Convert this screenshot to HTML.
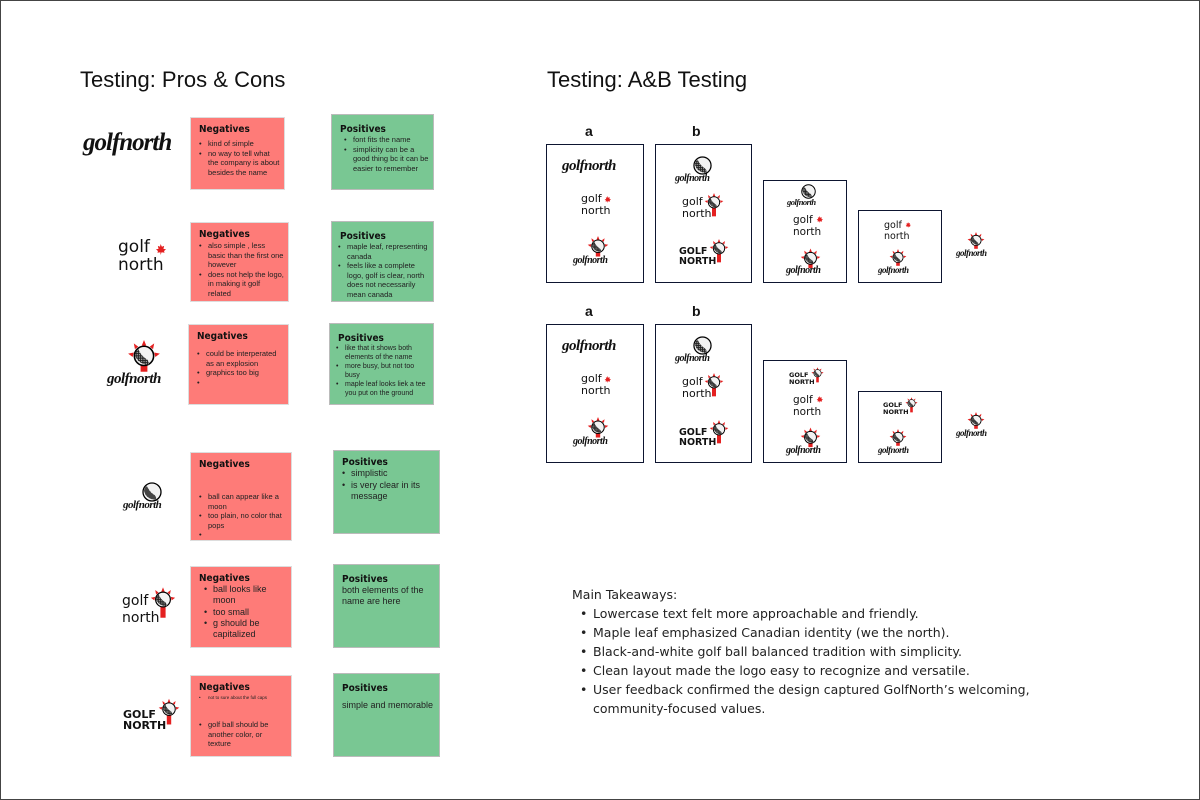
<!DOCTYPE html>
<html><head><meta charset="utf-8"><style>
*{margin:0;padding:0;box-sizing:border-box}
body{width:1200px;height:800px;background:#fff;font-family:"Liberation Sans",sans-serif;position:relative;overflow:hidden}
.frame{position:absolute;left:0;top:0;width:1200px;height:800px;border:1px solid #444}
.a{position:absolute}
h1{position:absolute;font-weight:normal;font-size:22px;color:#111;white-space:nowrap}
.neg{position:absolute;background:#fe7b78;border:1px solid #ddd}
.pos{position:absolute;background:#79c793;border:1px solid #bbb}
.hd{font-family:"DejaVu Sans Condensed","DejaVu Sans",sans-serif;font-weight:bold;font-size:10px;color:#111;margin:6px 0 0 8px}
.card ul{list-style:none;font-size:7.5px;line-height:9.5px;color:#222;margin:4px 4px 0 8px}
.card li{padding-left:9px;position:relative}
.card li:before{content:"•";position:absolute;left:0}
.script{font-family:"Liberation Serif",serif;font-style:italic;font-weight:bold;color:#111;white-space:nowrap;letter-spacing:-0.5px}
.gn{font-family:"DejaVu Sans",sans-serif;color:#111;white-space:nowrap}
.cap{font-family:"DejaVu Sans",sans-serif;font-weight:bold;color:#111;white-space:nowrap;line-height:1}
.box{position:absolute;border:1.5px solid #0d1530}
.lbl{position:absolute;font-size:14px;font-weight:bold;color:#111}
.tk{position:absolute;left:572px;top:585px;font-family:"DejaVu Sans",sans-serif;font-size:12.5px;color:#222;line-height:19px}
.tk ul{list-style:none;margin-left:8px}
.tk li{padding-left:13px;position:relative}
.tk li:before{content:"•";position:absolute;left:0}
</style></head><body>
<svg width="0" height="0" style="position:absolute">
<defs>
<pattern id="dots" width="2" height="2" patternUnits="userSpaceOnUse"><rect width="2" height="2" fill="#222"/><circle cx="1" cy="1" r="0.5" fill="#ddd"/></pattern>
<symbol id="ball" viewBox="0 0 20 20"><circle cx="10" cy="10" r="9" fill="#f2f2f2" stroke="#000" stroke-width="1.3"/><path d="M2 9 Q4 17 14 18 Q15 14 11 12 Q7 9 5 4 Q2 6 2 9Z" fill="url(#dots)"/></symbol>
<symbol id="tee" viewBox="0 0 30 36"><g fill="#e42020"><path d="M15 0l2 5h-4z"/><path d="M6 3l4 3-3 2z"/><path d="M24 3l-4 3 3 2z"/><path d="M1 12l5-1-1 4z"/><path d="M29 12l-5-1 1 4z"/><rect x="12" y="22" width="6" height="13"/></g><circle cx="15" cy="14" r="8.5" fill="#f2f2f2" stroke="#000" stroke-width="1.4"/><path d="M7 13 Q9 21 19 22 Q20 18 16 16 Q12 13 10 8 Q7 10 7 13Z" fill="url(#dots)"/></symbol>
<symbol id="teeS" viewBox="0 0 30 30"><g fill="#e42020"><path d="M15 0l2 5h-4z"/><path d="M6 3l4 3-3 2z"/><path d="M24 3l-4 3 3 2z"/><path d="M1 12l5-1-1 4z"/><path d="M29 12l-5-1 1 4z"/><rect x="12" y="22" width="6" height="6"/></g><circle cx="15" cy="14" r="8.5" fill="#f2f2f2" stroke="#000" stroke-width="1.4"/><path d="M7 13 Q9 21 19 22 Q20 18 16 16 Q12 13 10 8 Q7 10 7 13Z" fill="url(#dots)"/></symbol>
<symbol id="leaf" viewBox="0 0 10 10"><path d="M5 0l1.3 2.5 2-.8-.6 2.8 2.3.2-1.8 1.8.5 1.5-2.7-.5L5 10 4.9 7.5l-2.7.5.5-1.5L.9 4.7l2.3-.2-.6-2.8 2 .8z" fill="#e42020"/></symbol>
</defs></svg>
<div class="frame"></div>
<h1 style="left:80px;top:67px">Testing: Pros &amp; Cons</h1>
<h1 style="left:547px;top:67px">Testing: A&amp;B Testing</h1>

<div class="a script" style="left:83px;top:129px;font-size:25px;letter-spacing:-1px">golfnorth</div>
<div class="a gn" style="left:118px;top:238px;font-size:17px;line-height:18px">golf<br>north</div>
<svg class="a" style="left:155px;top:244px" width="11" height="11"><use href="#leaf"/></svg>
<svg class="a" style="left:127px;top:340px" width="34" height="34"><use href="#teeS"/></svg>
<div class="a script" style="left:107px;top:371px;font-size:15px">golfnorth</div>
<svg class="a" style="left:142px;top:482px" width="20" height="20"><use href="#ball"/></svg>
<div class="a script" style="left:123px;top:499px;font-size:11px">golfnorth</div>
<div class="a gn" style="left:122px;top:593px;font-size:14px;line-height:17px">golf<br>north</div>
<svg class="a" style="left:150px;top:585px" width="26" height="36"><use href="#tee"/></svg>
<div class="a cap" style="left:123px;top:709px;font-size:11px">GOLF<br>NORTH</div>
<svg class="a" style="left:158px;top:697px" width="22" height="30"><use href="#tee"/></svg>

<div class="neg card" style="left:190px;top:117px;width:95px;height:73px"><div class="hd">Negatives</div><ul><li>kind of simple</li><li>no way to tell what the company is about besides the name</li></ul></div>
<div class="pos card" style="left:331px;top:114px;width:103px;height:76px"><div class="hd" style="margin-top:9px">Positives</div><ul style="margin-top:0;margin-left:12px"><li>font fits the name</li><li>simplicity can be a good thing bc it can be easier to remember</li></ul></div>

<div class="neg card" style="left:190px;top:222px;width:99px;height:80px"><div class="hd">Negatives</div><ul style="margin-top:1px"><li>also simple , less basic than the first one however</li><li>does not help the logo, in making it golf related</li></ul></div>
<div class="pos card" style="left:331px;top:221px;width:103px;height:81px"><div class="hd" style="margin-top:9px">Positives</div><ul style="margin-top:0;margin-left:6px"><li>maple leaf, representing canada</li><li>feels like a complete logo, golf is clear, north does not necessarily mean canada</li></ul></div>

<div class="neg card" style="left:188px;top:324px;width:101px;height:81px"><div class="hd">Negatives</div><ul style="margin-top:7px"><li>could be interperated as an explosion</li><li>graphics too big</li><li></li></ul></div>
<div class="pos card" style="left:329px;top:323px;width:105px;height:82px"><div class="hd" style="margin-top:9px">Positives</div><ul style="margin-top:0;margin-left:6px;font-size:7px;line-height:9px"><li>like that it shows both elements of the name</li><li>more busy, but not too busy</li><li>maple leaf looks liek a tee you put on the ground</li></ul></div>

<div class="neg card" style="left:190px;top:452px;width:102px;height:89px"><div class="hd">Negatives</div><ul style="margin-top:22px"><li>ball can appear like a moon</li><li>too plain, no color that pops</li><li></li></ul></div>
<div class="pos card" style="left:333px;top:450px;width:107px;height:84px"><div class="hd">Positives</div><ul style="font-size:9px;line-height:11.5px;margin-top:0;margin-left:8px"><li>simplistic</li><li>is very clear in its message</li></ul></div>

<div class="neg card" style="left:190px;top:566px;width:102px;height:82px"><div class="hd">Negatives</div><ul style="font-size:9px;line-height:11.3px;margin-top:0;margin-left:13px"><li>ball looks like moon</li><li>too small</li><li>g should be capitalized</li></ul></div>
<div class="pos card" style="left:333px;top:564px;width:107px;height:84px"><div class="hd" style="margin-top:9px">Positives</div><div style="font-size:9px;line-height:11px;color:#222;margin:0 4px 0 8px">both elements of the name are here</div></div>

<div class="neg card" style="left:190px;top:675px;width:102px;height:82px"><div class="hd">Negatives</div><ul style="margin-top:2px"><li style="font-size:4.5px;line-height:5px">not to sure about the full caps</li><li style="margin-top:20px">golf ball should be another color, or texture</li></ul></div>
<div class="pos card" style="left:333px;top:673px;width:107px;height:84px"><div class="hd" style="margin-top:9px">Positives</div><div style="font-size:9px;color:#222;margin:6px 0 0 8px">simple and memorable</div></div>

<div class="lbl" style="left:585px;top:123px">a</div>
<div class="lbl" style="left:692px;top:123px">b</div>
<div class="box" style="left:546px;top:144px;width:98px;height:139px"></div>
<div class="box" style="left:655px;top:144px;width:97px;height:139px"></div>
<div class="box" style="left:763px;top:180px;width:84px;height:103px"></div>
<div class="box" style="left:858px;top:210px;width:84px;height:73px"></div>

<div class="a script" style="left:562px;top:158px;font-size:15px">golfnorth</div>
<div class="a gn" style="left:581px;top:193px;font-size:11px;line-height:12px">golf<br>north</div>
<svg class="a" style="left:604px;top:196px" width="7" height="7"><use href="#leaf"/></svg>
<svg class="a" style="left:587px;top:235px" width="22" height="24"><use href="#teeS"/></svg>
<div class="a script" style="left:573px;top:255px;font-size:10px">golfnorth</div>

<svg class="a" style="left:693px;top:156px" width="19" height="19"><use href="#ball"/></svg>
<div class="a script" style="left:675px;top:173px;font-size:10px">golfnorth</div>
<div class="a gn" style="left:682px;top:196px;font-size:11px;line-height:12px">golf<br>north</div>
<svg class="a" style="left:704px;top:190px" width="20" height="30"><use href="#tee"/></svg>
<div class="a cap" style="left:679px;top:247px;font-size:9.5px">GOLF<br>NORTH</div>
<svg class="a" style="left:709px;top:236px" width="20" height="30"><use href="#tee"/></svg>

<svg class="a" style="left:801px;top:184px" width="15" height="15"><use href="#ball"/></svg>
<div class="a script" style="left:787px;top:197px;font-size:8.5px">golfnorth</div>
<div class="a gn" style="left:793px;top:214px;font-size:10.5px;line-height:12px">golf<br>north</div>
<svg class="a" style="left:816px;top:216px" width="7" height="7"><use href="#leaf"/></svg>
<svg class="a" style="left:800px;top:248px" width="21" height="22"><use href="#teeS"/></svg>
<div class="a script" style="left:786px;top:265px;font-size:10px">golfnorth</div>

<div class="a gn" style="left:884px;top:220px;font-size:9.5px;line-height:11px">golf<br>north</div>
<svg class="a" style="left:905px;top:222px" width="6" height="6"><use href="#leaf"/></svg>
<svg class="a" style="left:889px;top:249px" width="18" height="18"><use href="#teeS"/></svg>
<div class="a script" style="left:878px;top:265px;font-size:9px">golfnorth</div>

<svg class="a" style="left:967px;top:232px" width="18" height="18"><use href="#teeS"/></svg>
<div class="a script" style="left:956px;top:248px;font-size:9px">golfnorth</div>

<div class="lbl" style="left:585px;top:303px">a</div>
<div class="lbl" style="left:692px;top:303px">b</div>
<div class="box" style="left:546px;top:324px;width:98px;height:139px"></div>
<div class="box" style="left:655px;top:324px;width:97px;height:139px"></div>
<div class="box" style="left:763px;top:360px;width:84px;height:103px"></div>
<div class="box" style="left:858px;top:391px;width:84px;height:72px"></div>

<div class="a script" style="left:562px;top:338px;font-size:15px">golfnorth</div>
<div class="a gn" style="left:581px;top:373px;font-size:11px;line-height:12px">golf<br>north</div>
<svg class="a" style="left:604px;top:376px" width="7" height="7"><use href="#leaf"/></svg>
<svg class="a" style="left:587px;top:416px" width="22" height="24"><use href="#teeS"/></svg>
<div class="a script" style="left:573px;top:436px;font-size:10px">golfnorth</div>

<svg class="a" style="left:693px;top:336px" width="19" height="19"><use href="#ball"/></svg>
<div class="a script" style="left:675px;top:353px;font-size:10px">golfnorth</div>
<div class="a gn" style="left:682px;top:376px;font-size:11px;line-height:12px">golf<br>north</div>
<svg class="a" style="left:704px;top:370px" width="20" height="30"><use href="#tee"/></svg>
<div class="a cap" style="left:679px;top:428px;font-size:9.5px">GOLF<br>NORTH</div>
<svg class="a" style="left:709px;top:417px" width="20" height="30"><use href="#tee"/></svg>

<div class="a cap" style="left:789px;top:372px;font-size:6.5px">GOLF<br>NORTH</div>
<svg class="a" style="left:811px;top:365px" width="13" height="20"><use href="#tee"/></svg>
<div class="a gn" style="left:793px;top:394px;font-size:10.5px;line-height:12px">golf<br>north</div>
<svg class="a" style="left:816px;top:396px" width="7" height="7"><use href="#leaf"/></svg>
<svg class="a" style="left:800px;top:427px" width="21" height="22"><use href="#teeS"/></svg>
<div class="a script" style="left:786px;top:445px;font-size:10px">golfnorth</div>

<div class="a cap" style="left:883px;top:402px;font-size:6.5px">GOLF<br>NORTH</div>
<svg class="a" style="left:905px;top:395px" width="13" height="20"><use href="#tee"/></svg>
<svg class="a" style="left:889px;top:429px" width="18" height="18"><use href="#teeS"/></svg>
<div class="a script" style="left:878px;top:445px;font-size:9px">golfnorth</div>

<svg class="a" style="left:967px;top:412px" width="18" height="18"><use href="#teeS"/></svg>
<div class="a script" style="left:956px;top:428px;font-size:9px">golfnorth</div>

<div class="tk">Main Takeaways:
<ul><li>Lowercase text felt more approachable and friendly.</li>
<li>Maple leaf emphasized Canadian identity (we the north).</li>
<li>Black-and-white golf ball balanced tradition with simplicity.</li>
<li>Clean layout made the logo easy to recognize and versatile.</li>
<li>User feedback confirmed the design captured GolfNorth’s welcoming,<br>community-focused values.</li></ul></div>
</body></html>
